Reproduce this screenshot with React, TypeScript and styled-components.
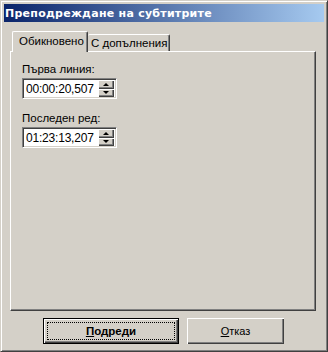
import React from 'react'
import styled, { createGlobalStyle, css } from 'styled-components'

const face = '#d4d0c8'
const shadow = '#808080'
const darkShadow = '#404040'

const GlobalStyle = createGlobalStyle`
  html, body {
    margin: 0;
    padding: 0;
    background: ${ face };
  }
  body {
    font-family: "Liberation Sans", Arial, sans-serif;
    font-size: 11.5px;
    color: #000;
  }
`

const raised = css`
  box-shadow: inset 1px 1px #fff, inset -1px -1px ${ darkShadow }, inset -2px -2px ${ shadow };
`

const Window = styled.div`
  width: 328px;
  height: 352px;
  box-sizing: border-box;
  background: ${ face };
  border: 1px solid;
  border-color: ${ face } ${ darkShadow } ${ darkShadow } ${ face };
  box-shadow: inset 1px 1px #fff, inset -1px -1px ${ shadow };
  padding: 3px;
  display: flex;
  flex-direction: column;
`

const TitleBar = styled.div`
  height: 18px;
  flex-shrink: 0;
  display: flex;
  align-items: center;
  padding-left: 1px;
  background: linear-gradient(to right, #0a246a, #a6caf0);
  color: #fff;
  font-family: "DejaVu Sans", "Liberation Sans", sans-serif;
  font-weight: bold;
  font-size: 11px;
  letter-spacing: 0.25px;
`

const Body = styled.div`
  padding: 9px 8px 0 6px;
  display: flex;
  flex-direction: column;
`

const TabRow = styled.div`
  display: flex;
  align-items: flex-end;
  height: 20px;
  padding-left: 2px;
  position: relative;
  z-index: 1;
`

const Tab = styled.div<{ $active?: boolean }>`
  box-sizing: border-box;
  display: flex;
  align-items: center;
  background: ${ face };
  border-top: 1px solid #fff;
  border-left: 1px solid #fff;
  border-right: 1px solid ${ darkShadow };
  border-radius: 2px 2px 0 0;
  box-shadow: inset -1px 0 ${ shadow };
  white-space: nowrap;
  ${ p => p.$active ? css`
    height: 21px;
    margin-bottom: -1px;
    width: 76px;
    padding: 0 0 3px 6px;
  ` : css`
    height: 17px;
    width: 82px;
    padding: 0 0 1px 3px;
    border-left: none;
  ` }
`

const Panel = styled.div`
  box-sizing: border-box;
  height: 260px;
  border: 1px solid;
  border-color: #fff ${ darkShadow } ${ darkShadow } #fff;
  box-shadow: inset -1px -1px ${ shadow };
  padding: 11px 11px;
  display: flex;
  flex-direction: column;
  gap: 13px;
`

const Field = styled.div`
  display: flex;
  flex-direction: column;
  gap: 2px;
`

const Label = styled.div`
  height: 13px;
  line-height: 13px;
`

const Edit = styled.div`
  box-sizing: border-box;
  width: 95px;
  height: 21px;
  background: #fff;
  border: 1px solid;
  border-color: ${ shadow } #fff #fff ${ shadow };
  box-shadow: inset 1px 1px ${ darkShadow }, inset -1px -1px ${ face };
  padding: 2px;
  display: flex;
  align-items: center;
`

const EditText = styled.div`
  flex: 1;
  padding-left: 1px;
  font-size: 12px;
  letter-spacing: -0.2px;
`

const Spin = styled.div`
  display: flex;
  flex-direction: column;
  width: 16px;
  height: 17px;
`

const SpinButton = styled.div`
  flex: 1;
  background: ${ face };
  ${ raised }
  display: flex;
  align-items: center;
  justify-content: center;
`

const Arrow = styled.div<{ $down?: boolean }>`
  width: 0;
  height: 0;
  border-left: 3px solid transparent;
  border-right: 3px solid transparent;
  ${ p => p.$down
    ? css`border-top: 3px solid #000;`
    : css`border-bottom: 3px solid #000;` }
`

const ButtonRow = styled.div`
  display: flex;
  gap: 8px;
  padding: 7px 0 0 33px;
`

const Button = styled.div<{ $default?: boolean, $width: number }>`
  box-sizing: border-box;
  width: ${ p => p.$width }px;
  height: 26px;
  background: ${ face };
  display: flex;
  align-items: center;
  justify-content: center;
  font-size: 11px;
  ${ p => p.$default ? css`
    border: 1px solid #000;
    box-shadow: inset 1px 1px #fff, inset -1px -1px ${ darkShadow }, inset -2px -2px ${ shadow };
    padding: 3px;
    font-weight: bold;
    font-size: 11.5px;
  ` : css`
    ${ raised }
  ` }
`

const Focus = styled.div`
  box-sizing: border-box;
  width: 100%;
  height: 100%;
  border: 1px dotted #000;
  display: flex;
  align-items: center;
  justify-content: center;
`

const U = styled.span`
  text-decoration: underline;
`

const Spinner = () => (
  <Spin>
    <SpinButton><Arrow /></SpinButton>
    <SpinButton><Arrow $down /></SpinButton>
  </Spin>
)

const fields = [
  { label: 'Първа линия:', value: '00:00:20,507' },
  { label: 'Последен ред:', value: '01:23:13,207' },
]

const App = () => (
  <>
    <GlobalStyle />
    <Window>
      <TitleBar>Преподреждане на субтитрите</TitleBar>
      <Body>
        <TabRow>
          <Tab $active>Обикновено</Tab>
          <Tab>С допълнения</Tab>
        </TabRow>
        <Panel>
          { fields.map(f => (
            <Field key={ f.label }>
              <Label>{ f.label }</Label>
              <Edit>
                <EditText>{ f.value }</EditText>
                <Spinner />
              </Edit>
            </Field>
          )) }
        </Panel>
        <ButtonRow>
          <Button $default $width={ 136 }>
            <Focus><U>П</U>одреди</Focus>
          </Button>
          <Button $width={ 97 }><U>О</U>тказ</Button>
        </ButtonRow>
      </Body>
    </Window>
  </>
)

export default App
